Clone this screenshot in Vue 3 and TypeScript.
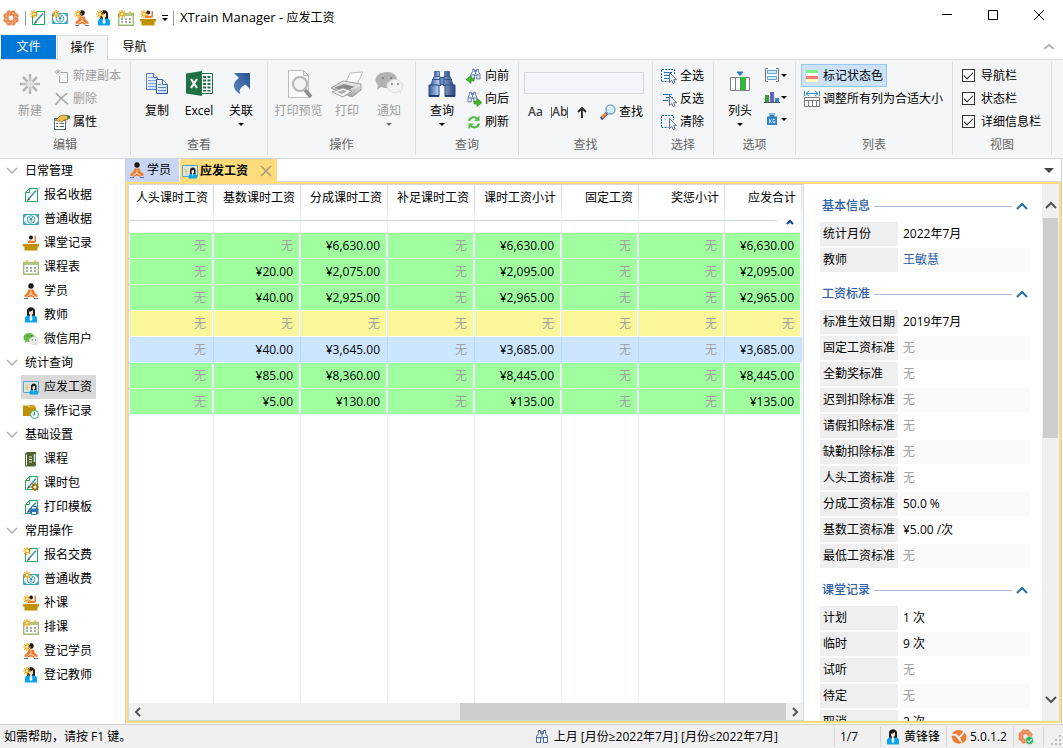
<script setup lang="ts">
import { ref } from 'vue'

interface NavItem { label: string; icon: string; isNew?: boolean; active?: boolean }
interface NavGroup { label: string; items: NavItem[] }
interface SalaryRow { state: 'green' | 'yellow' | 'selected'; cells: string[] }
interface DetailSection { title: string; rows: [string, string][] }

const quickItems: NavItem[] = [
  { label: '报名交费', icon: 'doc', isNew: true },
  { label: '普通收费', icon: 'money', isNew: true },
  { label: '登记学员', icon: 'student', isNew: true },
  { label: '登记教师', icon: 'teacher', isNew: true },
  { label: '排课', icon: 'calendar', isNew: true },
  { label: '补课', icon: 'lesson', isNew: true },
]

const navGroups: NavGroup[] = [
  {
    label: '日常管理',
    items: [
      { label: '报名收据', icon: 'doc' },
      { label: '普通收据', icon: 'money' },
      { label: '课堂记录', icon: 'lesson' },
      { label: '课程表', icon: 'calendar' },
      { label: '学员', icon: 'student' },
      { label: '教师', icon: 'teacher' },
      { label: '微信用户', icon: 'wechat' },
    ],
  },
  {
    label: '统计查询',
    items: [
      { label: '应发工资', icon: 'salary', active: true },
      { label: '操作记录', icon: 'folder' },
    ],
  },
  {
    label: '基础设置',
    items: [
      { label: '课程', icon: 'book' },
      { label: '课时包', icon: 'docgear' },
      { label: '打印模板', icon: 'docprint' },
    ],
  },
  {
    label: '常用操作',
    items: [
      { label: '报名交费', icon: 'doc', isNew: true },
      { label: '普通收费', icon: 'money', isNew: true },
      { label: '补课', icon: 'lesson', isNew: true },
      { label: '排课', icon: 'calendar', isNew: true },
      { label: '登记学员', icon: 'student', isNew: true },
      { label: '登记教师', icon: 'teacher', isNew: true },
    ],
  },
]

const columns = ['人头课时工资', '基数课时工资', '分成课时工资', '补足课时工资', '课时工资小计', '固定工资', '奖惩小计', '应发合计']

const rows: SalaryRow[] = [
  { state: 'green', cells: ['无', '无', '¥6,630.00', '无', '¥6,630.00', '无', '无', '¥6,630.00'] },
  { state: 'green', cells: ['无', '¥20.00', '¥2,075.00', '无', '¥2,095.00', '无', '无', '¥2,095.00'] },
  { state: 'green', cells: ['无', '¥40.00', '¥2,925.00', '无', '¥2,965.00', '无', '无', '¥2,965.00'] },
  { state: 'yellow', cells: ['无', '无', '无', '无', '无', '无', '无', '无'] },
  { state: 'selected', cells: ['无', '¥40.00', '¥3,645.00', '无', '¥3,685.00', '无', '无', '¥3,685.00'] },
  { state: 'green', cells: ['无', '¥85.00', '¥8,360.00', '无', '¥8,445.00', '无', '无', '¥8,445.00'] },
  { state: 'green', cells: ['无', '¥5.00', '¥130.00', '无', '¥135.00', '无', '无', '¥135.00'] },
]

const sections: DetailSection[] = [
  { title: '基本信息', rows: [['统计月份', '2022年7月'], ['教师', '王敏慧']] },
  {
    title: '工资标准',
    rows: [
      ['标准生效日期', '2019年7月'],
      ['固定工资标准', '无'],
      ['全勤奖标准', '无'],
      ['迟到扣除标准', '无'],
      ['请假扣除标准', '无'],
      ['缺勤扣除标准', '无'],
      ['人头工资标准', '无'],
      ['分成工资标准', '50.0 %'],
      ['基数工资标准', '¥5.00 /次'],
      ['最低工资标准', '无'],
    ],
  },
  { title: '课堂记录', rows: [['计划', '1 次'], ['临时', '9 次'], ['试听', '无'], ['待定', '无'], ['取消', '2 次']] },
]

const petals = [0, 45, 90, 135, 180, 225, 270, 315]

const views = ref([
  { label: '导航栏', on: true },
  { label: '状态栏', on: true },
  { label: '详细信息栏', on: true },
])
const keyword = ref('')
</script>

<template>
  <div class="app">
    <svg class="defs" aria-hidden="true">
      <defs>
        <linearGradient id="g-steel" x1="0" y1="0" x2="1" y2="0">
          <stop offset="0" stop-color="#3a5c9a" /><stop offset=".35" stop-color="#b7cdf0" /><stop offset="1" stop-color="#29457c" />
        </linearGradient>
        <linearGradient id="g-gray" x1="0" y1="0" x2="0" y2="1">
          <stop offset="0" stop-color="#f2f2f2" /><stop offset="1" stop-color="#a5a5a5" />
        </linearGradient>
        <linearGradient id="g-arrow" x1="0" y1="1" x2="1" y2="0">
          <stop offset="0" stop-color="#5e86bd" /><stop offset="1" stop-color="#265490" />
        </linearGradient>
        <linearGradient id="g-paper" x1="0" y1="0" x2="1" y2="1">
          <stop offset="0" stop-color="#ffffff" /><stop offset="1" stop-color="#bcd2f2" />
        </linearGradient>
      </defs>
      <symbol id="i-star" viewBox="0 0 16 16">
        <g stroke="#f5a81c" stroke-width="1.2"><path d="M4 0v8M0 4h8M1.2 1.2l5.6 5.6M6.800 1.200L1.200 6.800" /></g>
        <circle cx="4" cy="4" r="1.300" fill="#ffe9a8" />
      </symbol>
      <symbol id="i-logo" viewBox="0 0 16 16">
        <path
          v-for="a in petals" :key="a" :transform="'rotate(' + a + ' 8 8)'"
          d="M7 5.500C6 3 7.500.8 10.200.8C12 .8 12.500 2.200 12 3C11 2 9 2.500 9 5z" fill="#f08a52" stroke="#e06a34" stroke-width=".5"
        />
      </symbol>
      <symbol id="i-doc" viewBox="0 0 16 16">
        <path d="M6.500 1.500h8v13h-12V5.500z" fill="#fff" stroke="#17ab5c" /><path d="M6.500 1.500v4h-4" fill="none" stroke="#17ab5c" />
        <path d="M5.500 12L13 3.500" stroke="#4796b0" stroke-width="1.700" /><path d="M4 14l1-3 2 1.800z" fill="#3c4c58" />
      </symbol>
      <symbol id="i-money" viewBox="0 0 16 16">
        <path d="M.5 3.500h15v10H.5z" fill="#fff" stroke="#3aa5bd" /><path d="M1 4h3L1 7zM15 4h-3l3 3zM1 13h3l-3-3zM15 13h-3l3-3z" fill="#45aec5" />
        <circle cx="8" cy="8.500" r="3.800" fill="#fff" stroke="#3aa5bd" /><path d="M6.500 6l1.500 2 1.500-2M8 8v3M6.500 8.500h3" fill="none" stroke="#2795b2" />
      </symbol>
      <symbol id="i-lesson" viewBox="0 0 16 16">
        <circle cx="8" cy="2.500" r="2" fill="#151515" /><path d="M5 8V6l2-1 2 1 2.500-.5V1H13v6l-2 1z" fill="#ed7d31" />
        <path d="M0 9h16v2.500h-1.500v4h-13v-4H0z" fill="#bf9000" />
      </symbol>
      <symbol id="i-calendar" viewBox="0 0 16 16">
        <path d="M.7 3.500h14.600v11.800H.7z" fill="#fff" stroke="#9dbb72" stroke-width="1.400" /><path d="M1 3h14v3H1z" fill="#aec685" />
        <path d="M4 1v3M12 1v3" stroke="#f4b93c" stroke-width="1.500" /><path d="M3 9h10M3 12h10" stroke="#4a5946" stroke-dasharray="2 2" />
      </symbol>
      <symbol id="i-student" viewBox="0 0 16 16">
        <circle cx="8" cy="3" r="2.700" fill="#171717" />
        <path d="M5.500 6.500h5L12 10l2.500 2v2l-3-.5V15L8 13.500 4.500 15v-1.500l-3 .5v-2L4 10z" fill="#ed7d31" />
        <path d="M8 7.500V11M4.500 13L8 11l3.500 2" fill="none" stroke="#fbe0cc" /><path d="M1 15.500h4M11 15.500h4" stroke="#4d74a8" />
      </symbol>
      <symbol id="i-teacher" viewBox="0 0 16 16">
        <path d="M4 9V4c0-5 8-5 8 0v5z" fill="#1b1b1b" /><path d="M2 15.500v-4C2 9 4 8.500 6 8.500h4c2.500 0 4 1 4 3v4z" fill="#0aa3ec" />
        <path d="M6 4.500c2 .3 3-.5 4-1.500v3.500L8.800 8v1.500L8 13l-1-3.500V8L6 6.500z" fill="#ffe4cb" /><path d="M7 9.500h2L9.500 12 8 14.500 6.500 12z" fill="#fff" />
      </symbol>
      <symbol id="i-wechat" viewBox="0 0 16 16">
        <path d="M6 2c7 0 8 8 1 9-1 0-2 0-2.800-.3L2 12l.4-2C-1.500 7 1 2 6 2z" fill="#65bd43" /><ellipse cx="11" cy="9.800" rx="4.800" ry="4" fill="#e9e9e9" stroke="#d1d1d1" stroke-width=".5" /><path d="M12.500 13l2 2v-3z" fill="#ddd" />
        <path d="M4 5h1M8 5h1M9 9h1M12 9h1" stroke="#384e35" />
      </symbol>
      <symbol id="i-salary" viewBox="0 0 16 16">
        <path d="M.5 2.500h15v11H.5z" fill="#d9e4e6" stroke="#57a7c8" /><path d="M2.500 5.500L4 7.500l1.500-2M4 7.500v4M2.500 8.500h3" fill="none" stroke="#f0c050" />
        <path d="M8 11V7c0-3.500 5.500-3.500 5.500 0v4z" fill="#1b1b1b" /><path d="M6.500 15.500V13c0-3 8.500-3 8.500 0v2.500z" fill="#0aa3ec" /><path d="M9.500 7.500c1 0 1.800-.3 2.500-1v3l-.8 1L10.800 14 10 10.500l-.5-1z" fill="#fff1e2" />
      </symbol>
      <symbol id="i-folder" viewBox="0 0 16 16">
        <path d="M0 2.500h5l1.500 2H13V13H0z" fill="#bf9000" /><path d="M6 2h5l2 2v1H7z" fill="#d0a320" /><circle cx="11.500" cy="11.500" r="4" fill="#fff" stroke="#35b17a" /><path d="M11.500 9v3H9.500" fill="none" stroke="#35b17a" />
      </symbol>
      <symbol id="i-book" viewBox="0 0 16 16">
        <path d="M2 2.500L4 1h9v13l-1 1.500H2z" fill="#4d632c" /><path d="M3.500 3.500v11" stroke="#f4f4ea" /><path d="M6 6h3M6 8.500h3M6 11h3" stroke="#f4f4ea" /><path d="M11.500 3v8" stroke="#c4e6f0" stroke-width="1.600" />
      </symbol>
      <symbol id="i-docgear" viewBox="0 0 16 16">
        <use href="#i-doc" width="16" height="16" /><path d="M12 7.500v8.500M7.500 12h8.500M9 9l6 6M15 9l-6 6" stroke="#9c7410" stroke-width="1.500" /><circle cx="12" cy="12" r="2.300" fill="#fff" stroke="#9c7410" stroke-width="1.500" />
      </symbol>
      <symbol id="i-docprint" viewBox="0 0 16 16">
        <use href="#i-doc" width="16" height="16" /><path d="M6.500 9.500h9V15h-9z" fill="#2e75b6" /><path d="M8.500 7.500h5V10h-5zM8.500 12.500h5v3h-5z" fill="#fff" stroke="#2e75b6" />
      </symbol>
      <symbol id="i-newcopy" viewBox="0 0 16 16">
        <path d="M7 4.500h6.500v10h-8V8" fill="#fbfbfb" stroke="#a8a8a8" /><path d="M4 1v6M1 4h6M2 2l4 4M6 2L2 6" stroke="#a8a8a8" stroke-width=".8" />
      </symbol>
      <symbol id="i-delete" viewBox="0 0 16 16"><path d="M2 2c4 4 7 8 12 11M13.500 2C9 5 5 9 1.500 14" fill="none" stroke="#a5a5a5" stroke-width="1.500" /></symbol>
      <symbol id="i-props" viewBox="0 0 16 16">
        <path d="M.5 4.500h11v11H.5z" fill="#fff" stroke="#5b6980" /><path d="M1 5h10v2H1z" fill="#8aa4cf" /><path d="M2 9.500h2M5.500 9.500H10M2 12.500h2M5.500 12.500H10" stroke="#4d607d" />
        <path d="M2 6l4-4 3-1 5 .5 2 2-2 2-4 .5-2 2-2-1-2 .5z" fill="#edbd4a" stroke="#7f5b1b" stroke-width=".7" /><path d="M13 1.500h3v3h-3z" fill="#4d8246" />
      </symbol>
      <symbol id="i-binoc" viewBox="0 0 32 32">
        <path d="M8.500 3.500h5v5h-5zM18.500 3.500h5v5h-5z" fill="url(#g-steel)" stroke="#5170a6" />
        <path d="M8 8.500h6l1 9H4.500zM18 8.500h6l3.500 9H17z" fill="url(#g-steel)" stroke="#3f5f99" />
        <path d="M14 9.500h4v7h-4z" fill="#6e8dc2" stroke="#35548c" />
        <path d="M3 17h10v11.500H3zM19 17h10v11.500H19z" fill="url(#g-steel)" stroke="#2d4b82" />
        <path d="M4 11.500h24" stroke="#35548c" stroke-dasharray="0 2 8 4 8 2" /><path d="M3 27.500h10M19 27.500h10" stroke="#1f3868" />
      </symbol>
      <symbol id="i-binocs" viewBox="0 0 16 16">
        <path d="M4.500 1.500h2v3h3v-3h2v3l2 3v6h-4V9h-3v4.500h-4v-6l2-3z" fill="#f2f6fd" stroke="#47679d" /><path d="M3 8.500h4M9 8.500h4M6.500 3h3M8 5v3" stroke="#3d5f99" />
      </symbol>
      <symbol id="i-prev" viewBox="0 0 16 16">
        <use href="#i-binocs" x="3" y="0" width="13" height="13" /><path d="M0 11.500l5-4V10h3v3H5v2.500z" fill="#45b52c" stroke="#288e20" stroke-width=".6" />
      </symbol>
      <symbol id="i-next" viewBox="0 0 16 16">
        <use href="#i-binocs" x="0" y="0" width="13" height="13" /><path d="M16 11.500l-5-4V10H8v3h3v2.500z" fill="#45b52c" stroke="#288e20" stroke-width=".6" />
      </symbol>
      <symbol id="i-refresh" viewBox="0 0 16 16">
        <path d="M3 7C3.500 3.500 8 2 11 4.500" fill="none" stroke="#59bc4e" stroke-width="2.200" /><path d="M13.500 1.500v5.500H8z" fill="#59bc4e" /><path d="M13 9.500c-.5 3.500-5 5-8 2.500" fill="none" stroke="#59bc4e" stroke-width="2.200" /><path d="M2.500 15V9.500H8z" fill="#59bc4e" />
      </symbol>
      <symbol id="i-up" viewBox="0 0 16 16"><path d="M8 14V4M4 8l4-4 4 4" fill="none" stroke="#303030" stroke-width="2" /></symbol>
      <symbol id="i-find" viewBox="0 0 16 16">
        <path d="M7 9l-6 6" stroke="#4c5c83" stroke-width="3.500" /><path d="M6 9.500l-4 4" stroke="#ef8b3e" stroke-width="2.500" /><circle cx="10.500" cy="5.500" r="4.500" fill="#cdeffc" stroke="#7ba8c8" stroke-width="1.400" /><path d="M8 5c0-2 2-3 4-2" fill="none" stroke="#fff" stroke-width="1.500" />
      </symbol>
      <symbol id="i-cursor" viewBox="0 0 16 16"><path d="M8.500 4.500v10l2.300-2 1.200 3 2-.8-1.300-3h2.800z" fill="#eef2f8" stroke="#66758c" /></symbol>
      <symbol id="i-all" viewBox="0 0 16 16">
        <path d="M.5 13V1.500h13V6M.5 13.500h7" fill="none" stroke="#2774b5" stroke-dasharray="2 1" /><path d="M3 4.500h8M3 7.500h5M3 10.500h5" stroke="#2774b5" /><use href="#i-cursor" width="16" height="16" />
      </symbol>
      <symbol id="i-invert" viewBox="0 0 16 16"><path d="M2 3.500h9M5 6.500h7M2 9.500h5" stroke="#2774b5" /><use href="#i-cursor" width="16" height="16" /></symbol>
      <symbol id="i-clear" viewBox="0 0 16 16"><path d="M.5 13V1.500h12V6M.5 13.500h7" fill="none" stroke="#2774b5" stroke-dasharray="2 1" /><use href="#i-cursor" width="16" height="16" /></symbol>
      <symbol id="i-rows" viewBox="0 0 16 16">
        <path d="M4 1.500H1.500v13H4M12 1.500h2.500v13H12" fill="none" stroke="#777" /><path d="M3.500 3.500h9v3h-9zM3.500 9.500h9v3h-9z" fill="#cfe9fa" stroke="#63a4d3" />
      </symbol>
      <symbol id="i-chart" viewBox="0 0 16 16"><path d="M1 6h4v7H1z" fill="#3d983d" /><path d="M6 3h4v10H6z" fill="#6662b5" /><path d="M11 9h4v4h-4z" fill="#3b85d7" /><path d="M0 13.500h16" stroke="#40566e" /></symbol>
      <symbol id="i-weight" viewBox="0 0 16 16">
        <path d="M5.500 2h5v3.500H13V14H3V5.500h2.500z" fill="#2e84c4" /><path d="M5.500 2h5v2h-5z" fill="#7dbce6" /><path d="M5.500 8v4M7.500 8L6 10l1.500 2M11 8.500H9v3h2v-1.500" fill="none" stroke="#d8ecfa" stroke-width=".8" />
      </symbol>
      <symbol id="i-state" viewBox="0 0 16 16"><path d="M2 2h12v12H2z" fill="#fff" /><path d="M2 2h12v3H2z" fill="#7cf283" /><path d="M2 8h12v3H2z" fill="#ff7b7b" /><path d="M2 11h12v3H2z" fill="#fdf6c5" /></symbol>
      <symbol id="i-fit" viewBox="0 0 16 16">
        <path d="M.5 0v5M15.500 0v5M2 2.500h12" stroke="#2e8ac8" /><path d="M5 0L2 2.500 5 5M11 0l3 2.500L11 5" fill="none" stroke="#2e8ac8" /><path d="M.5 6.500h15v9H.5zM.5 9.500h15M4.500 10v5M8.500 10v5M12.500 10v5" fill="#fff" stroke="#7b7b7b" />
      </symbol>
      <symbol id="i-pinwheel" viewBox="0 0 16 16">
        <path d="M1 5c2-4.500 9-5 11-2L8 7.500C6 5 4 4.500 1 5z" fill="#ed7d31" /><path d="M13 3.500c4 2.500 3 9-1.500 10.500L9 8.500c2-1 3.500-2.500 4-5z" fill="#ed7d31" /><path d="M.8 6.500C3 6 5 7 6.500 9.500L10.500 14C6 16.500.2 12 .8 6.500z" fill="#ed7d31" />
      </symbol>
      <symbol id="i-logook" viewBox="0 0 16 16"><use href="#i-logo" width="15" height="15" /><circle cx="11.500" cy="11.500" r="4" fill="#21b15c" stroke="#fff" stroke-width=".5" /><path d="M9.500 11.500l1.500 1.500 2.700-2.800" fill="none" stroke="#fff" stroke-width="1.300" /></symbol>
      <symbol id="b-new" viewBox="0 0 32 32">
        <path d="M16 6v20M6 16h20M9 9l14 14M23 9L9 23" stroke="#b4b4b4" stroke-width="2.500" /><circle cx="16" cy="16" r="3.500" fill="#e8e8e8" /><path d="M16 9v14M9 16h14" stroke="#d0d0d0" />
      </symbol>
      <symbol id="b-copy" viewBox="0 0 32 32">
        <path d="M5.500 5.500h7l4 4v12h-11z" fill="url(#g-paper)" stroke="#5b83c1" /><path d="M7 9.500h5M7 12.500h8M7 15.500h8M7 18.500h8" stroke="#7fa2d8" />
        <path d="M15.500 11.500h6l5 5v9h-11z" fill="url(#g-paper)" stroke="#34599b" /><path d="M12.500 5.500v4h4M21.500 11.500v5h5" fill="#fff" stroke="#4a71b2" />
        <path d="M17 16.500h3M17 19.500h8M17 22.500h8" stroke="#5f88c8" />
      </symbol>
      <symbol id="b-link" viewBox="0 0 32 32"><path d="M9 5h16v16l-4.500-4.500c-5.500 3-7 6.500-5 10-9-5.500-8-12.500-1.500-16.500z" fill="url(#g-arrow)" /></symbol>
      <symbol id="b-preview" viewBox="0 0 32 32">
        <path d="M5.500 2.500h15l5 5v22h-20z" fill="#fafafa" stroke="#bdbdbd" /><path d="M20.500 2.500v5h5" fill="none" stroke="#bdbdbd" /><circle cx="17" cy="16" r="7" fill="#f3f3f3" stroke="#b4b4b4" stroke-width="2" /><path d="M22 22l6 7" stroke="#8e8e8e" stroke-width="3.500" />
      </symbol>
      <symbol id="b-print" viewBox="0 0 32 32">
        <path d="M15 14l4-9 13-1-6 12z" fill="#fbfbfb" stroke="#bdbdbd" /><path d="M0 20l12-7 18 3v6l-9 7-10-4z" fill="url(#g-gray)" stroke="#9f9f9f" /><path d="M3 20l10-4 11 3-8 4z" fill="#8a8a8a" /><path d="M1 24l11-4 9 3-9 6z" fill="#f6f6f6" stroke="#a0a0a0" /><path d="M6 24l6-2 4 1-5 3z" fill="#aaa" /><path d="M20 21l9-4" stroke="#eee" />
      </symbol>
      <symbol id="b-notify" viewBox="0 0 32 32">
        <path d="M14 4c13 0 14 15 1 16-3 0-5 0-7-1l-4 3 1-5C-1 11 5 4 14 4z" fill="#b3b3b3" /><ellipse cx="22" cy="18" rx="8" ry="6.500" fill="#f1f1f1" stroke="#ddd" /><path d="M26 23l2 4v-5z" fill="#e4e4e4" /><path d="M9 10h2M17 10h2M18 16h2M24 16h2" stroke="#777" stroke-width="1.500" />
      </symbol>
      <symbol id="b-column" viewBox="0 0 32 32">
        <path d="M13 4h6l-3 3.500z" fill="#2d7ab9" stroke="#2d7ab9" /><path d="M6.500 9.500h19v13h-19zM11.500 10v12" fill="#fff" stroke="#808080" /><path d="M16 9h5v13h-5z" fill="#17ca25" /><path d="M16.500 10v12M21.500 10v12" stroke="#808080" />
      </symbol>
    </svg>

    <header class="titlebar">
      <svg class="icon"><use href="#i-logo" /></svg>
      <span class="tsep first"></span>
      <button v-for="q in quickItems" :key="q.label" class="quick" :aria-label="q.label">
        <svg class="icon"><use :href="'#i-' + q.icon" /><use v-if="q.isNew" href="#i-star" /></svg>
      </button>
      <button class="quick-more" aria-label="自定义"><i class="bar"></i><i class="caret"></i></button>
      <span class="tsep"></span>
      <span class="title"><span class="product">XTrain Manager - </span>应发工资</span>
      <div class="window-buttons">
        <button aria-label="最小化"><svg viewBox="0 0 12 12"><path d="M1 5.500h10" /></svg></button>
        <button aria-label="最大化"><svg viewBox="0 0 12 12"><path d="M1.500 1.500h9v9h-9z" /></svg></button>
        <button aria-label="关闭"><svg viewBox="0 0 12 12"><path d="M1 1l10 10M11 1L1 11" /></svg></button>
      </div>
    </header>

    <nav class="tabs">
      <button class="file">文件</button>
      <button class="tab on">操作</button>
      <button class="tab">导航</button>
      <button class="collapse" aria-label="折叠功能区"><svg viewBox="0 0 12 8"><path d="M1 6l5-4 5 4" /></svg></button>
    </nav>

    <section class="ribbon">
      <div class="group edit">
        <div class="body">
          <button class="big" disabled><svg><use href="#b-new" /></svg><span>新建</span></button>
          <div class="stack">
            <button disabled><svg class="icon"><use href="#i-newcopy" /></svg>新建副本</button>
            <button disabled><svg class="icon"><use href="#i-delete" /></svg>删除</button>
            <button><svg class="icon"><use href="#i-props" /></svg>属性</button>
          </div>
        </div>
        <h2>编辑</h2>
      </div>
      <div class="group look">
        <div class="body">
          <button class="big"><svg><use href="#b-copy" /></svg><span>复制</span></button>
          <button class="big">
            <svg viewBox="0 0 32 32">
              <path d="M18 5.500h11.500v20H18z" fill="#fff" stroke="#207245" /><path d="M3 5.500L19 3v25L3 25.500z" fill="#207245" />
              <path d="M20 8h3v2h-3zM24.500 8h3v2h-3zM20 11.500h3v2h-3zM24.500 11.500h3v2h-3zM20 15h3v2h-3zM24.500 15h3v2h-3zM20 18.500h3v2h-3zM24.500 18.500h3v2h-3zM20 22h3v1.500h-3zM24.500 22h3v1.500h-3z" fill="#207245" />
              <path d="M8 11l6 9M14 11l-6 9" stroke="#fff" stroke-width="2.200" />
            </svg>
            <span>Excel</span>
          </button>
          <button class="big"><svg><use href="#b-link" /></svg><span>关联</span><i class="caret"></i></button>
        </div>
        <h2>查看</h2>
      </div>
      <div class="group operate">
        <div class="body">
          <button class="big wide" disabled><svg><use href="#b-preview" /></svg><span>打印预览</span></button>
          <button class="big" disabled><svg><use href="#b-print" /></svg><span>打印</span></button>
          <button class="big" disabled><svg><use href="#b-notify" /></svg><span>通知</span><i class="caret"></i></button>
        </div>
        <h2>操作</h2>
      </div>
      <div class="group query">
        <div class="body">
          <button class="big"><svg><use href="#i-binoc" /></svg><span>查询</span><i class="caret"></i></button>
          <div class="stack">
            <button><svg class="icon"><use href="#i-prev" /></svg>向前</button>
            <button><svg class="icon"><use href="#i-next" /></svg>向后</button>
            <button><svg class="icon"><use href="#i-refresh" /></svg>刷新</button>
          </div>
        </div>
        <h2>查询</h2>
      </div>
      <div class="group search">
        <div class="body">
          <input v-model="keyword" type="text" aria-label="查找内容">
          <div class="find-row">
            <button class="match" aria-label="区分大小写">Aa</button>
            <button class="match whole" aria-label="全字匹配">Ab</button>
            <button aria-label="向上"><svg class="icon"><use href="#i-up" /></svg></button>
            <button class="find"><svg class="icon"><use href="#i-find" /></svg>查找</button>
          </div>
        </div>
        <h2>查找</h2>
      </div>
      <div class="group choose">
        <div class="body">
          <div class="stack">
            <button><svg class="icon"><use href="#i-all" /></svg>全选</button>
            <button><svg class="icon"><use href="#i-invert" /></svg>反选</button>
            <button><svg class="icon"><use href="#i-clear" /></svg>清除</button>
          </div>
        </div>
        <h2>选择</h2>
      </div>
      <div class="group options">
        <div class="body">
          <button class="big"><svg><use href="#b-column" /></svg><span>列头</span><i class="caret"></i></button>
          <div class="stack drop">
            <button aria-label="行高"><svg class="icon"><use href="#i-rows" /></svg><i class="caret"></i></button>
            <button aria-label="图表"><svg class="icon"><use href="#i-chart" /></svg><i class="caret"></i></button>
            <button aria-label="单位"><svg class="icon"><use href="#i-weight" /></svg><i class="caret"></i></button>
          </div>
        </div>
        <h2>选项</h2>
      </div>
      <div class="group list">
        <div class="body">
          <div class="stack">
            <button class="pressed"><svg class="icon"><use href="#i-state" /></svg>标记状态色</button>
            <button><svg class="icon"><use href="#i-fit" /></svg>调整所有列为合适大小</button>
          </div>
        </div>
        <h2>列表</h2>
      </div>
      <div class="group view">
        <div class="body">
          <div class="stack">
            <label v-for="v in views" :key="v.label"><input v-model="v.on" type="checkbox">{{ v.label }}</label>
          </div>
        </div>
        <h2>视图</h2>
      </div>
    </section>

    <div class="workspace">
      <aside class="sidebar">
        <div v-for="g in navGroups" :key="g.label">
          <button class="nav-group"><svg viewBox="0 0 12 8"><path d="M1 1l5 5 5-5" /></svg>{{ g.label }}</button>
          <button v-for="item in g.items" :key="item.label" class="nav-item" :class="{ active: item.active }">
            <svg class="icon"><use :href="'#i-' + item.icon" /><use v-if="item.isNew" href="#i-star" /></svg>{{ item.label }}
          </button>
        </div>
      </aside>

      <main class="main">
        <div class="doc-tabs">
          <button class="doc-tab"><svg class="icon"><use href="#i-student" /></svg>学员</button>
          <div class="doc-tab current">
            <svg class="icon"><use href="#i-salary" /></svg><strong>应发工资</strong>
            <button class="close" aria-label="关闭标签"><svg viewBox="0 0 12 12"><path d="M1 1l10 10M11 1L1 11" /></svg></button>
          </div>
          <button class="tab-list" aria-label="标签列表"><i class="caret large"></i></button>
        </div>

        <div class="frame">
          <section class="grid-pane">
            <div class="grid-view">
              <table class="grid">
                <colgroup>
                  <col class="c84"><col class="c87"><col class="c87"><col class="c87"><col class="c87"><col class="c77"><col class="c86"><col class="c77">
                </colgroup>
                <thead>
                  <tr><th v-for="c in columns" :key="c" scope="col">{{ c }}</th></tr>
                  <tr class="band">
                    <td v-for="n in 7" :key="n"></td>
                    <td class="last"><button aria-label="折叠分组"><svg viewBox="0 0 8 6"><path d="M1 5l3-3 3 3" /></svg></button></td>
                  </tr>
                </thead>
                <tbody>
                  <tr v-for="(r, i) in rows" :key="i" :class="r.state">
                    <td v-for="(c, j) in r.cells" :key="j" :class="{ none: c === '无' }">{{ c }}</td>
                  </tr>
                  <tr class="filler"><td v-for="n in 8" :key="n"></td></tr>
                </tbody>
              </table>
            </div>
            <div class="hscroll">
              <button aria-label="向左滚动"><svg viewBox="0 0 8 10"><path d="M6 1L2 5l4 4" /></svg></button>
              <div class="track"><div class="thumb"></div></div>
              <button aria-label="向右滚动"><svg viewBox="0 0 8 10"><path d="M2 1l4 4-4 4" /></svg></button>
            </div>
          </section>

          <section class="detail">
            <div class="detail-list">
              <div v-for="s in sections" :key="s.title" class="section">
                <h3><span>{{ s.title }}</span><i></i><button :aria-label="'折叠' + s.title"><svg viewBox="0 0 12 8"><path d="M1 7l5-5 5 5" /></svg></button></h3>
                <dl>
                  <div v-for="row in s.rows" :key="row[0]">
                    <dt>{{ row[0] }}</dt>
                    <dd :class="{ none: row[1] === '无' }"><a v-if="row[0] === '教师'" href="#">{{ row[1] }}</a><template v-else>{{ row[1] }}</template></dd>
                  </div>
                </dl>
              </div>
            </div>
            <div class="vscroll">
              <button aria-label="向上滚动"><svg viewBox="0 0 12 8"><path d="M1 7l5-5 5 5" /></svg></button>
              <div class="track"><div class="thumb"></div></div>
              <button aria-label="向下滚动"><svg viewBox="0 0 12 8"><path d="M1 1l5 5 5-5" /></svg></button>
            </div>
          </section>
        </div>
      </main>
    </div>

    <footer class="status">
      <span class="help">如需帮助，请按 F1 键。</span>
      <span class="filter"><svg class="icon"><use href="#i-binocs" /></svg>上月 [月份≥2022年7月] [月份≤2022年7月]</span>
      <span class="cell count">1/7</span>
      <span class="cell user"><svg class="icon"><use href="#i-teacher" /></svg>黄锋锋</span>
      <span class="cell version"><svg class="icon"><use href="#i-pinwheel" /></svg>5.0.1.2</span>
      <span class="cell ok"><svg class="icon"><use href="#i-logook" /></svg></span>
      <span class="cell grip"><svg viewBox="0 0 12 12"><path d="M8 0h2v2H8zM4 4h2v2H4zM8 4h2v2H8zM0 8h2v2H0zM4 8h2v2H4zM8 8h2v2H8z" /></svg></span>
    </footer>
  </div>
</template>

<style>
body { margin: 0; overflow: hidden; }
</style>

<style scoped>
.app {
  display: flex; flex-direction: column; height: 100vh; overflow: hidden; background: #fff; color: #000;
  font: 12px/18px "Open Sans", "Noto Sans CJK SC", sans-serif; white-space: nowrap;
}
.app *, .app *::before { box-sizing: border-box; }
.defs { position: absolute; width: 0; height: 0; }
button, input { font: inherit; color: inherit; margin: 0; }
button { display: inline-flex; align-items: center; padding: 0; border: 0; background: none; }
h2, h3, dl, dd { margin: 0; font: inherit; }
svg { display: block; flex: none; fill: none; }
.icon { width: 16px; height: 16px; }
.caret { width: 0; height: 0; border: 3px solid transparent; border-top-color: currentColor; border-bottom: 0; }
.caret.large { border-width: 5px 5px 0; color: #444; }

.titlebar { display: flex; align-items: center; flex: none; height: 35px; padding-left: 3px; }
.tsep { width: 1px; height: 14px; background: #999; margin: 0 6px 0 4px; }
.tsep.first { margin: 0 1px 0 6px; }
.quick { justify-content: center; width: 22px; height: 22px; }
.quick-more { flex-direction: column; gap: 2px; width: 8px; margin-left: 2px; }
.quick-more .bar { width: 6px; height: 1px; background: #000; }
.title { white-space: pre; }
.product { font-size: 13px; }
.window-buttons { display: flex; margin-left: auto; padding-right: 1px; align-self: flex-start; }
.window-buttons button { width: 46px; height: 30px; justify-content: center; }
.window-buttons svg { width: 12px; height: 12px; stroke: #000; }

.tabs { display: flex; flex: none; height: 25px; padding-left: 1px; border-bottom: 1px solid #dadbdc; }
.tabs button { justify-content: center; height: 24px; }
.file { width: 55px; margin-right: 1px; background: #0078d7; color: #fff; }
.tab { width: 51px; }
.tabs .tab.on { height: 25px; border: 1px solid #dadbdc; border-bottom: 0; background: #f5f6f7; }
.tabs .tab + .tab { width: 53px; }
.tabs .collapse { margin-left: auto; width: 28px; align-items: center; }
.collapse svg { width: 12px; height: 8px; stroke: #b5b5b5; stroke-width: 2; }

.ribbon { display: flex; flex: none; height: 99px; padding: 2px 0 3px; background: #f5f6f7; border-bottom: 1px solid #d5d8dc; }
.group { display: flex; flex-direction: column; flex: none; border-right: 1px solid #dcdee0; }
.body { display: flex; flex: none; height: 71px; padding-top: 2px; }
.group h2 { line-height: 23px; text-align: center; color: #666; }
.edit { width: 131px; } .edit .body { padding-left: 9px; gap: 3px; }
.look { width: 137px; } .look .body { padding-left: 5px; }
.operate { width: 148px; } .operate .body { padding-left: 3px; }
.query { width: 103px; } .query .body { padding-left: 5px; gap: 3px; }
.search { width: 134px; } .search .body { flex-direction: column; padding: 10px 8px 0 5px; }
.choose { width: 61px; } .choose .body { padding-left: 8px; }
.options { width: 82px; } .options .body { padding-left: 5px; gap: 3px; }
.list { width: 157px; } .list .body { padding-left: 5px; }
.view { width: 99px; } .view .body { padding-left: 9px; }
.big { flex-direction: column; width: 42px; height: 69px; padding-top: 4px; }
.big.wide { width: 55px; }
.big svg { width: 32px; height: 32px; margin-bottom: 2px; }
.big .caret { margin-top: 3px; }
.stack { display: flex; flex-direction: column; align-items: flex-start; }
.stack button, .stack label { display: flex; align-items: center; gap: 3px; height: 23px; }
.stack.drop button { height: 22px; gap: 1px; }
button:disabled { color: #a0a0a0; }
button:disabled .caret { color: #777; }
.list .stack button { padding: 0 3px; }
.list .stack .pressed { padding: 0 3px 0 2px; border: 1px solid #98c6f5; background: #cce2f8; }
.search input { width: 100%; height: 22px; padding: 0 4px; border: 1px solid #d5d9df; background: #f2f6fa; outline: 0; }
.find-row { display: flex; align-items: center; height: 36px; padding-left: 4px; }
.match { color: #444; font-weight: 600; width: 23px; }
.match.whole::before, .match.whole::after { content: ""; width: 1px; height: 11px; background: #666; }
.find { gap: 3px; margin-left: 10px; }
.view .stack label { gap: 6px; }
.view input {
  appearance: none; display: grid; place-content: center; width: 13px; height: 13px; border: 1px solid #333; background: #fff;
}
.view input:checked::before { content: ""; width: 9px; height: 5px; margin-bottom: 3px; border: solid #222; border-width: 0 0 1px 1px; transform: rotate(-45deg); }

.workspace { display: flex; flex: 1; min-height: 0; padding-right: 1px; }
.sidebar { flex: none; width: 125px; overflow: hidden; }
.nav-group, .nav-item { display: flex; height: 24px; }
.nav-group { gap: 7px; padding-left: 6px; }
.nav-group svg { width: 12px; height: 8px; stroke: #ababab; stroke-width: 1.5; }
.nav-item { gap: 5px; margin-left: 21px; padding: 0 4px 0 2px; }
.nav-item.active { background: #d9d9d9; }

.main { display: flex; flex-direction: column; flex: 1; min-width: 0; padding-bottom: 1px; border-left: 1px solid #d0d3da; border-right: 1px solid #d0d3da; }
.doc-tabs { display: flex; flex: none; height: 23px; border-bottom: 1px solid #d5dae4; }
.doc-tab { display: flex; align-items: center; gap: 2px; height: 22px; background: #c8d5f3; padding: 0 8px 0 3px; }
.doc-tab.current { height: 23px; padding: 0 5px 0 2px; margin-left: 1px; background: #ffdc7b; }
.doc-tab.current strong { margin-right: 10px; }
.close svg { width: 12px; height: 12px; stroke: #a79b7c; stroke-width: 1.5; }
.tab-list { margin-left: auto; width: 17px; }
.frame { display: flex; flex: 1; min-height: 0; border: 2px solid #ffdc7b; }
.grid-pane { display: flex; flex-direction: column; flex: 1; min-width: 0; border: 1px solid #d6d9de; }
.grid-view { flex: 1; min-height: 0; overflow: hidden; padding-left: 1px; }
.grid { width: 672px; height: 100%; table-layout: fixed; border-spacing: 0; }
.c84 { width: 84px; } .c87 { width: 87px; } .c77 { width: 77px; } .c86 { width: 86px; }
.grid th { height: 25px; padding: 0 5px 0 0; border-right: 1px solid #dcdcdc; font-weight: 400; text-align: right; }
.grid td { height: 26px; padding: 0 7px 0 0; border-right: 1px solid #e6effc; text-align: right; }
.grid .band td { height: 23px; padding: 0; background: linear-gradient(#cfd8ea, #cfd8ea) 0 10px / 100% 1px no-repeat; }
.grid .band .last { background-size: 52px 1px; }
.band button { margin-right: 7px; height: 19px; vertical-align: top; }
.band svg { width: 8px; height: 6px; stroke: #0b3b94; stroke-width: 2; }
.green td { background: #9fff9f; box-shadow: inset -1px -1px #fff; }
.yellow td { background: #faf79b; box-shadow: inset -1px -1px #fff; }
.selected td { background: #cce6ff; border-right-color: #b8dcff; box-shadow: inset 0 -1px #fff; }
.none { color: #a3a3a3; }
.grid .filler td { height: 100%; }
.hscroll { display: flex; flex: none; height: 17px; background: #f0f0f0; }
.hscroll button { width: 17px; justify-content: center; }
.hscroll svg { width: 8px; height: 10px; }
.hscroll svg, .vscroll svg { stroke: #555; stroke-width: 2; }
.hscroll .track { display: flex; flex: 1; justify-content: flex-end; }
.hscroll .thumb { width: 51%; background: #cdcdcd; }

.detail { display: flex; flex: none; width: 255px; }
.detail-list { flex: 1; overflow: hidden; padding: 6px 12px 0 16px; }
.section { padding-bottom: 4px; }
.section h3 { display: flex; align-items: center; gap: 4px; height: 32px; padding: 0 2px; color: #2b5ea5; font-weight: 500; }
.section h3 i { flex: 1; height: 1px; background: #acbde0; }
.section h3 button { width: 12px; }
.section h3 svg { width: 12px; height: 8px; stroke: #266fa6; stroke-width: 2; }
.section dl > div { display: flex; gap: 2px; height: 24px; margin-bottom: 2px; line-height: 24px; }
.section dt { flex: none; width: 78px; padding-left: 3px; background: #efefef; }
.section dd { flex: 1; padding-left: 3px; }
.section dl > div:nth-child(even) dd { background: #fafafa; }
.section a { color: #2b5ea5; text-decoration: none; }
.vscroll { display: flex; flex-direction: column; flex: none; width: 17px; padding: 8px 1px; background: #f0f0f0; }
.vscroll button { height: 26px; justify-content: center; }
.vscroll svg { width: 12px; height: 8px; }
.vscroll .track { flex: 1; }
.vscroll .thumb { height: 47%; background: #cdcdcd; }

.status { display: flex; align-items: center; flex: none; height: 24px; padding-left: 4px; background: #f0f0f0; border-top: 1px solid #d2d2d2; }
.filter { display: flex; align-items: center; gap: 4px; margin-left: auto; padding-right: 56px; }
.cell { display: flex; align-items: center; height: 20px; border-left: 1px solid #d5d5d5; }
.count { width: 46px; padding-left: 5px; }
.user { width: 66px; padding-left: 4px; gap: 3px; }
.version { width: 67px; padding-left: 4px; gap: 3px; }
.ok { width: 30px; padding-left: 4px; }
.grip { width: 20px; align-items: flex-end; justify-content: flex-end; }
.grip svg { width: 12px; height: 12px; fill: #bcbcbc; }
</style>
